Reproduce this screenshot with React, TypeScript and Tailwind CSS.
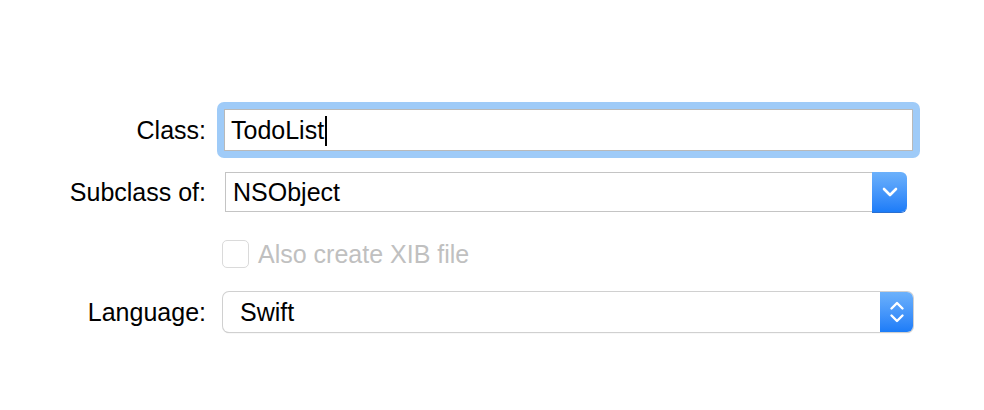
import React from 'react';

const font = { fontFamily: '"Liberation Sans", Arial, sans-serif' };

function ChevronDown() {
  return (
    <svg width="16" height="10" viewBox="0 0 16 10" fill="none">
      <path d="M2 2l6 6 6-6" stroke="white" strokeWidth="2.6" strokeLinecap="round" strokeLinejoin="round" />
    </svg>
  );
}

function UpDown() {
  return (
    <svg width="16" height="24" viewBox="0 0 16 24" fill="none">
      <path d="M2.5 8.5L8 3l5.5 5.5" stroke="white" strokeWidth="2.4" strokeLinecap="round" strokeLinejoin="round" />
      <path d="M2.5 15.5L8 21l5.5-5.5" stroke="white" strokeWidth="2.4" strokeLinecap="round" strokeLinejoin="round" />
    </svg>
  );
}

export default function App() {
  return (
    <div className="h-[410px] w-[984px] bg-white pt-[102px] text-[25px] text-black" style={font}>
      {/* Class */}
      <div className="flex h-[56px] items-center">
        <div className="w-[206px] pt-[2px] text-right">Class:</div>
        <div className="ml-[11px] h-[56px] w-[703px] rounded-[7px] bg-[#9fcbf8] p-[7px]">
          <div className="flex h-full items-center border border-[#b9b9b9] bg-white pl-[6px] pt-[2px]">
            <span>TodoList</span>
            <span className="ml-[1px] h-[30px] w-[2px] bg-black" />
          </div>
        </div>
      </div>

      {/* Subclass of */}
      <div className="mt-[14px] flex h-[40px] items-center">
        <div className="w-[206px] pt-[2px] text-right">Subclass of:</div>
        <div className="ml-[19px] flex h-[40px] w-[682px]">
          <div className="flex flex-1 items-center border border-r-0 border-[#c4c4c4] bg-white pl-[7px] pt-[2px]">NSObject</div>
          <div className="flex w-[35px] items-center justify-center rounded-r-[6px] bg-gradient-to-b from-[#6cb1fb] to-[#1b7cf8] shadow-[0_1px_0_#2a6fd0]">
            <ChevronDown />
          </div>
        </div>
      </div>

      {/* Checkbox */}
      <div className="mt-[28px] flex h-[28px] items-center">
        <div className="ml-[222px] h-[28px] w-[27px] rounded-[5px] border border-[#dadada] bg-white" />
        <span className="ml-[9px] pt-[2px] text-[#c0c0c0]">Also create XIB file</span>
      </div>

      {/* Language */}
      <div className="mt-[24px] flex h-[40px] items-center">
        <div className="w-[206px] pt-[2px] text-right">Language:</div>
        <div className="ml-[17px] flex h-[40px] w-[690px] rounded-[6px] bg-white shadow-[0_0_0_1px_#d0d0d0,0_1px_1px_#b8b8b8]">
          <div className="flex flex-1 items-center pl-[17px] pt-[2px]">Swift</div>
          <div className="flex w-[33px] items-center justify-center rounded-r-[6px] bg-gradient-to-b from-[#6cb1fb] to-[#1b7cf8]">
            <UpDown />
          </div>
        </div>
      </div>
    </div>
  );
}
